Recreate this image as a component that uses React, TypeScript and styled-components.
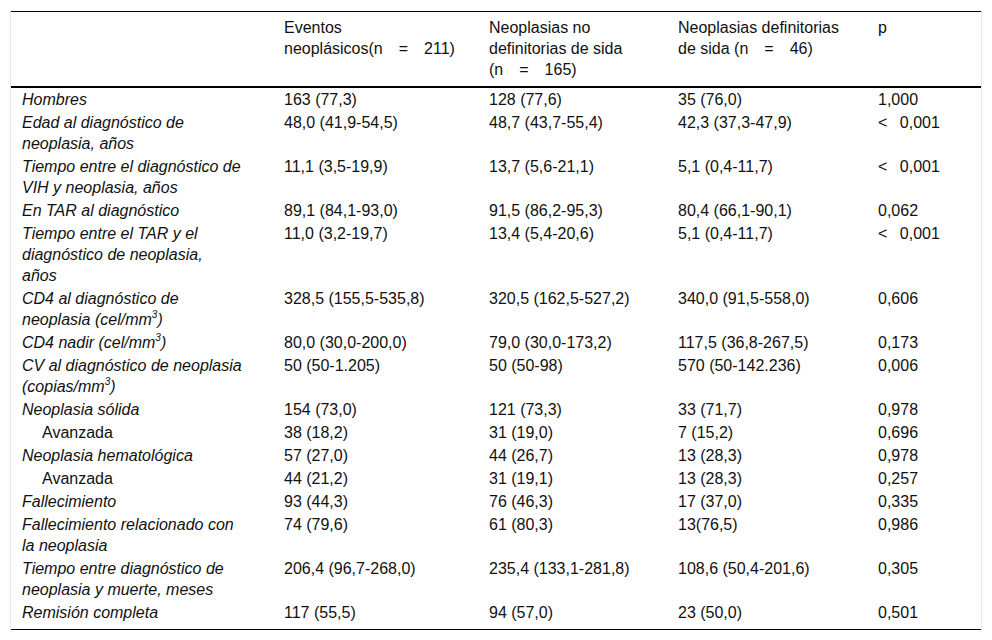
import { FC, ReactNode } from 'react';
import { createGlobalStyle, styled } from 'styled-components';

const GlobalStyle = createGlobalStyle`
  html, body {
    margin: 0;
    padding: 0;
    background: #fff;
  }
  body {
    font-family: "Liberation Sans", Arial, Helvetica, sans-serif;
    color: #111;
  }
`;

const Frame = styled.div`
  margin: 10px 10px 0;
  padding-top: 1px;
  padding-bottom: 2px;
  border-left: 1px solid #e6e6e6;
  border-right: 1px solid #e6e6e6;
`;

const Table = styled.table`
  width: 100%;
  border-collapse: collapse;
  table-layout: fixed;
  font-family: "Liberation Sans", Arial, Helvetica, sans-serif;
  font-size: 16px;
  line-height: 21px;
  color: #111;
  border-top: 1px solid #000;
  border-bottom: 1px solid #000;
`;

const HeadCell = styled.th`
  text-align: left;
  font-weight: normal;
  vertical-align: top;
  padding: 5px 8px 6px 11px;
  border-bottom: 2px solid #000;
`;

const Cell = styled.td<{ $italic?: boolean; $indent?: boolean }>`
  vertical-align: top;
  padding: 1px 8px 1px ${(p) => (p.$indent ? '31px' : '11px')};
  font-style: ${(p) => (p.$italic ? 'italic' : 'normal')};

  tr:last-child > & {
    padding-bottom: 6px;
  }
`;

const NoWrap = styled.span`
  white-space: nowrap;
`;

const Sup = styled.sup`
  font-size: 10px;
  line-height: 0;
  vertical-align: 7px;
`;

interface Row {
  label: ReactNode;
  indent?: boolean;
  values: [string, string, string, string];
}

const mm3 = (
  <>
    mm<Sup>3</Sup>
  </>
);

// "<" followed by a wide gap, as in the p column of the source table
const LT = '<\u2002 ';
const GAP = '\u2003';

const rows: Row[] = [
  { label: 'Hombres', values: ['163 (77,3)', '128 (77,6)', '35 (76,0)', '1,000'] },
  {
    label: (
      <>
        Edad al diagnóstico de
        <br />
        neoplasia, años
      </>
    ),
    values: ['48,0 (41,9-54,5)', '48,7 (43,7-55,4)', '42,3 (37,3-47,9)', LT + '0,001'],
  },
  {
    label: (
      <>
        Tiempo entre el diagnóstico de
        <br />
        VIH y neoplasia, años
      </>
    ),
    values: ['11,1 (3,5-19,9)', '13,7 (5,6-21,1)', '5,1 (0,4-11,7)', LT + '0,001'],
  },
  {
    label: 'En TAR al diagnóstico',
    values: ['89,1 (84,1-93,0)', '91,5 (86,2-95,3)', '80,4 (66,1-90,1)', '0,062'],
  },
  {
    label: (
      <>
        Tiempo entre el TAR y el
        <br />
        diagnóstico de neoplasia,
        <br />
        años
      </>
    ),
    values: ['11,0 (3,2-19,7)', '13,4 (5,4-20,6)', '5,1 (0,4-11,7)', LT + '0,001'],
  },
  {
    label: (
      <>
        CD4 al diagnóstico de
        <br />
        neoplasia (cel/{mm3})
      </>
    ),
    values: ['328,5 (155,5-535,8)', '320,5 (162,5-527,2)', '340,0 (91,5-558,0)', '0,606'],
  },
  {
    label: <>CD4 nadir (cel/{mm3})</>,
    values: ['80,0 (30,0-200,0)', '79,0 (30,0-173,2)', '117,5 (36,8-267,5)', '0,173'],
  },
  {
    label: (
      <>
        CV al diagnóstico de neoplasia
        <br />
        (copias/{mm3})
      </>
    ),
    values: ['50 (50-1.205)', '50 (50-98)', '570 (50-142.236)', '0,006'],
  },
  { label: 'Neoplasia sólida', values: ['154 (73,0)', '121 (73,3)', '33 (71,7)', '0,978'] },
  { label: 'Avanzada', indent: true, values: ['38 (18,2)', '31 (19,0)', '7 (15,2)', '0,696'] },
  { label: 'Neoplasia hematológica', values: ['57 (27,0)', '44 (26,7)', '13 (28,3)', '0,978'] },
  { label: 'Avanzada', indent: true, values: ['44 (21,2)', '31 (19,1)', '13 (28,3)', '0,257'] },
  { label: 'Fallecimiento', values: ['93 (44,3)', '76 (46,3)', '17 (37,0)', '0,335'] },
  {
    label: (
      <>
        Fallecimiento relacionado con
        <br />
        la neoplasia
      </>
    ),
    values: ['74 (79,6)', '61 (80,3)', '13(76,5)', '0,986'],
  },
  {
    label: (
      <>
        Tiempo entre diagnóstico de
        <br />
        neoplasia y muerte, meses
      </>
    ),
    values: ['206,4 (96,7-268,0)', '235,4 (133,1-281,8)', '108,6 (50,4-201,6)', '0,305'],
  },
  { label: 'Remisión completa', values: ['117 (55,5)', '94 (57,0)', '23 (50,0)', '0,501'] },
];

const Count: FC<{ value: number }> = ({ value }) => (
  <NoWrap>
    (n{GAP}={GAP}
    {value})
  </NoWrap>
);

const App: FC = () => (
  <>
    <GlobalStyle />
    <Frame>
      <Table>
        <colgroup>
          <col style={{ width: 262 }} />
          <col style={{ width: 205 }} />
          <col style={{ width: 189 }} />
          <col style={{ width: 200 }} />
          <col />
        </colgroup>
        <thead>
          <tr>
            <HeadCell />
            <HeadCell>
              Eventos
              <br />
              neoplásicos
              <Count value={211} />
            </HeadCell>
            <HeadCell>
              Neoplasias no
              <br />
              definitorias de sida
              <br />
              <Count value={165} />
            </HeadCell>
            <HeadCell>
              Neoplasias definitorias
              <br />
              de sida <Count value={46} />
            </HeadCell>
            <HeadCell>p</HeadCell>
          </tr>
        </thead>
        <tbody>
          {rows.map((r, i) => (
            <tr key={i}>
              <Cell $italic={!r.indent} $indent={r.indent}>
                {r.label}
              </Cell>
              {r.values.map((v, j) => (
                <Cell key={j}>{v}</Cell>
              ))}
            </tr>
          ))}
        </tbody>
      </Table>
    </Frame>
  </>
);

export default App;
